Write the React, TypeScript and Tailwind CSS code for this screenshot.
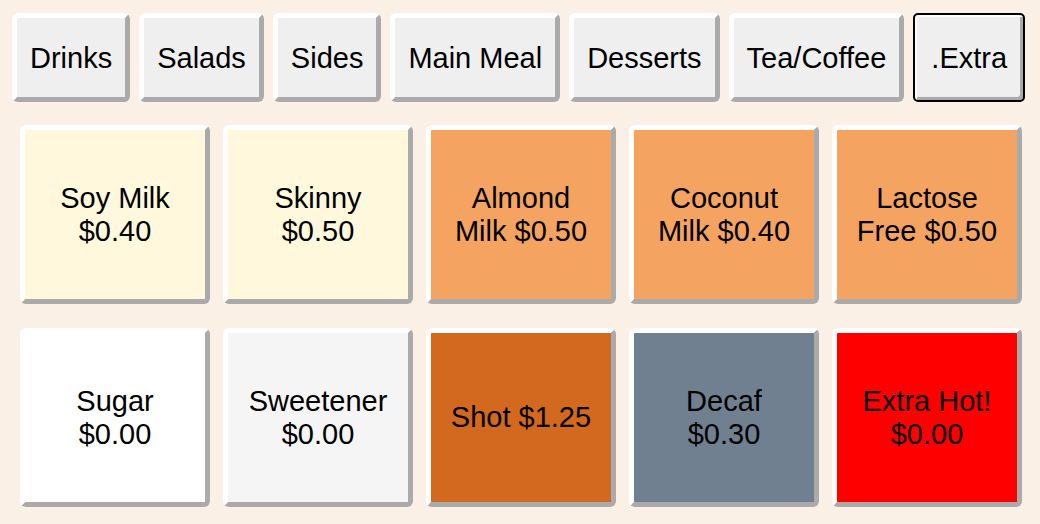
const tabs = ["Drinks", "Salads", "Sides", "Main Meal", "Desserts", "Tea/Coffee", ".Extra"];

type Item = { lines: string[]; bg: string };

const items: Item[] = [
  { lines: ["Soy Milk", "$0.40"], bg: "bg-[#fff8dc]" },
  { lines: ["Skinny", "$0.50"], bg: "bg-[#fff8dc]" },
  { lines: ["Almond", "Milk $0.50"], bg: "bg-[#f4a460]" },
  { lines: ["Coconut", "Milk $0.40"], bg: "bg-[#f4a460]" },
  { lines: ["Lactose", "Free $0.50"], bg: "bg-[#f4a460]" },
  { lines: ["Sugar", "$0.00"], bg: "bg-white" },
  { lines: ["Sweetener", "$0.00"], bg: "bg-[#f5f5f5]" },
  { lines: ["Shot $1.25"], bg: "bg-[#d2691e]" },
  { lines: ["Decaf", "$0.30"], bg: "bg-[#708090]" },
  { lines: ["Extra Hot!", "$0.00"], bg: "bg-[#ff0000]" },
];

export default function App() {
  const active = ".Extra";

  return (
    <div className="min-h-[524px] w-[1040px] bg-[#faf0e6] px-[12px] pt-[13px] font-['Liberation_Sans',Arial,sans-serif] text-black">
      <div className="flex gap-[9px]">
        {tabs.map((tab) => (
          <button
            key={tab}
            type="button"
            className={
              tab === active
                ? "h-[89px] rounded-[5px] border-2 border-black bg-[#efefef] px-[16px] text-[29px] leading-[32px] shadow-[inset_2px_2px_0_#ffffff,inset_-3px_-3px_0_#aaaaaa]"
                : "h-[89px] rounded-[6px] border-[5px] border-t-white border-l-white border-r-[#aaaaaa] border-b-[#aaaaaa] bg-[#efefef] px-[13px] text-[29px] leading-[32px]"
            }
          >
            {tab}
          </button>
        ))}
      </div>
      <div className="mt-[23px] ml-[8px] grid w-[1002px] grid-cols-5 gap-x-[13px] gap-y-[24px]">
        {items.map((item) => (
          <button
            key={item.lines.join(" ")}
            type="button"
            className={`flex h-[179px] flex-col items-center justify-center rounded-[6px] border-[5px] border-t-white border-l-white border-r-[#aaaaaa] border-b-[#aaaaaa] text-[29px] leading-[33px] ${item.bg}`}
          >
            {item.lines.map((line) => (
              <span key={line}>{line}</span>
            ))}
          </button>
        ))}
      </div>
    </div>
  );
}
